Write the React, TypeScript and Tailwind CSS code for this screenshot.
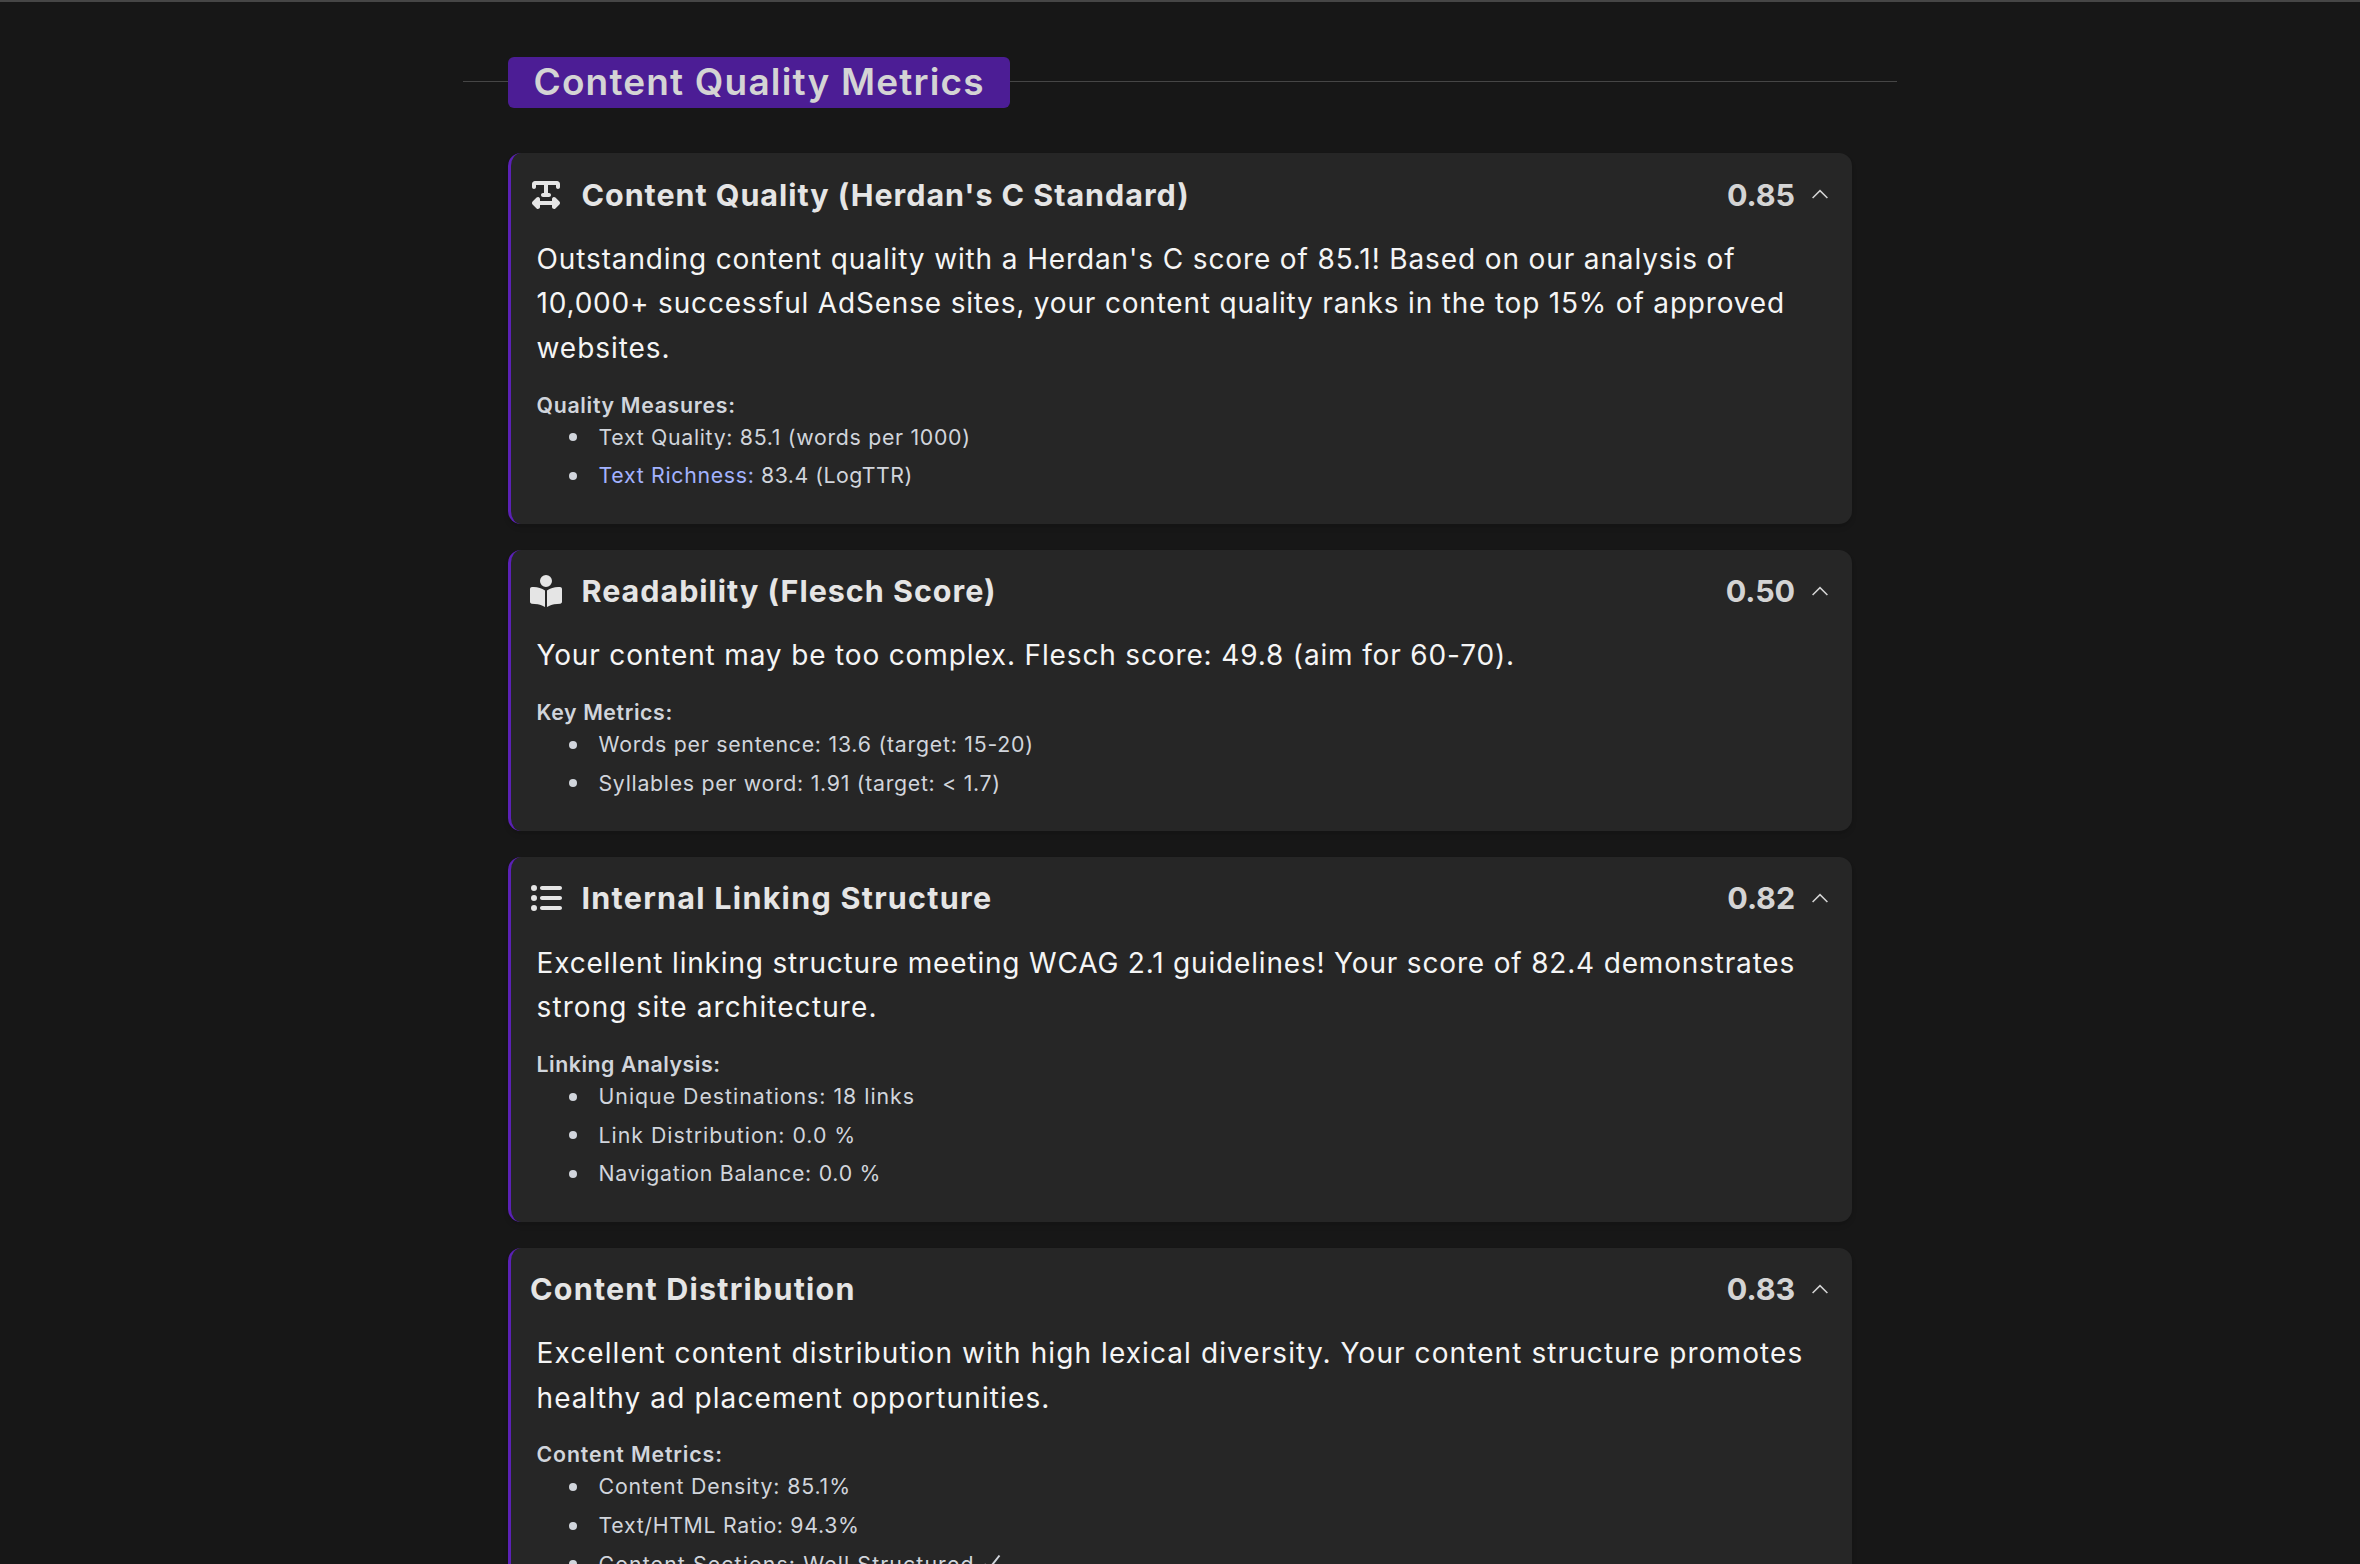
import type { ReactNode } from 'react'
import { FaBookOpenReader, FaListUl, FaTextWidth } from 'react-icons/fa6'

type Line = { text: ReactNode, tracking: string }

type Metric = {
  title: Line
  icon?: ReactNode
  score: string
  summary: Line[]
  label: Line
  items: Line[]
}

const metrics: Metric[] = [
  {
    title: { text: 'Content Quality (Herdan\'s C Standard)', tracking: 'tracking-[0.95px]' },
    icon: <FaTextWidth className="size-8" />,
    score: '0.85',
    summary: [
      { text: 'Outstanding content quality with a Herdan\'s C score of 85.1! Based on our analysis of', tracking: 'tracking-[0.875px]' },
      { text: '10,000+ successful AdSense sites, your content quality ranks in the top 15% of approved', tracking: 'tracking-[0.815px]' },
      { text: 'websites.', tracking: 'tracking-[0.95px]' },
    ],
    label: { text: 'Quality Measures:', tracking: 'tracking-[0.7px]' },
    items: [
      { text: 'Text Quality: 85.1 (words per 1000)', tracking: 'tracking-[0.694px]' },
      {
        text: (
          <>
            <a href="#" className="tracking-[0.7px] text-indigo-300">Text Richness:</a>
            {' 83.4 (LogTTR)'}
          </>
        ),
        tracking: 'tracking-[0.49px]',
      },
    ],
  },
  {
    title: { text: 'Readability (Flesch Score)', tracking: 'tracking-[0.98px]' },
    icon: <FaBookOpenReader className="size-8" />,
    score: '0.50',
    summary: [
      { text: 'Your content may be too complex. Flesch score: 49.8 (aim for 60-70).', tracking: 'tracking-[0.85px]' },
    ],
    label: { text: 'Key Metrics:', tracking: 'tracking-[0.6px]' },
    items: [
      { text: 'Words per sentence: 13.6 (target: 15-20)', tracking: 'tracking-[0.76px]' },
      { text: 'Syllables per word: 1.91 (target: < 1.7)', tracking: 'tracking-[0.71px]' },
    ],
  },
  {
    title: { text: 'Internal Linking Structure', tracking: 'tracking-[1.27px]' },
    icon: <FaListUl className="size-8" />,
    score: '0.82',
    summary: [
      { text: 'Excellent linking structure meeting WCAG 2.1 guidelines! Your score of 82.4 demonstrates', tracking: 'tracking-[0.825px]' },
      { text: 'strong site architecture.', tracking: 'tracking-[1.1px]' },
    ],
    label: { text: 'Linking Analysis:', tracking: 'tracking-[0.54px]' },
    items: [
      { text: 'Unique Destinations: 18 links', tracking: 'tracking-[0.99px]' },
      { text: 'Link Distribution: 0.0 %', tracking: 'tracking-[1px]' },
      { text: 'Navigation Balance: 0.0 %', tracking: 'tracking-[0.73px]' },
    ],
  },
  {
    title: { text: 'Content Distribution', tracking: 'tracking-[1.21px]' },
    score: '0.83',
    summary: [
      { text: 'Excellent content distribution with high lexical diversity. Your content structure promotes', tracking: 'tracking-[1.085px]' },
      { text: 'healthy ad placement opportunities.', tracking: 'tracking-[1.11px]' },
    ],
    label: { text: 'Content Metrics:', tracking: 'tracking-[0.87px]' },
    items: [
      { text: 'Content Density: 85.1%', tracking: 'tracking-[0.87px]' },
      { text: 'Text/HTML Ratio: 94.3%', tracking: 'tracking-[0.69px]' },
      {
        text: (
          <>
            Content Sections: Well Structured
            <CheckMark />
          </>
        ),
        tracking: 'tracking-[1.11px]',
      },
    ],
  },
]

function CheckMark() {
  return (
    <svg viewBox="0 0 18 18" className="ml-2 inline size-[18px] align-baseline" fill="none" stroke="currentColor" strokeWidth="2">
      <path d="M1.5 10 5.5 15.5 16.5 1.5" />
    </svg>
  )
}

function ChevronUp() {
  return (
    <svg viewBox="0 0 16 10" className="mb-px h-[10px] w-4" fill="none" stroke="currentColor" strokeWidth="1.5">
      <path d="M.6 9 8 1.6 15.4 9" />
    </svg>
  )
}

function MetricCard({ title, icon, score, summary, label, items }: Metric) {
  return (
    <section className="rounded-[13px] border-l-[3px] border-[#5b21b6] bg-neutral-800 pt-[21.5px] pb-[29px] shadow-md">
      <header className="flex h-10 items-center pr-6 pl-[19px] text-neutral-200">
        {icon && <span className="mr-[19.5px] shrink-0">{icon}</span>}
        <h3 className={`text-[30.5px] leading-10 font-bold ${title.tracking}`}>{title.text}</h3>
        <div className="ml-auto flex items-center gap-[17px] text-neutral-300">
          <span className="text-[30.5px] leading-10 font-bold tracking-[-0.1px]">{score}</span>
          <ChevronUp />
        </div>
      </header>

      <div className="mt-[22.3px] pl-[25.5px] whitespace-nowrap">
        <p className="text-[28px] leading-[44.6px] text-neutral-100">
          {summary.map((line, i) => (
            <span key={i} className={`block ${line.tracking}`}>{line.text}</span>
          ))}
        </p>
        <div className="mt-[21px] text-[21.3px] text-gray-300">
          <h4 className={`leading-[26px] font-semibold ${label.tracking}`}>{label.text}</h4>
          <ul className="pl-8">
            {items.map((item, i) => (
              <li key={i} className="flex items-center leading-[38.6px]">
                <span className="mt-px mr-[22px] size-2 shrink-0 rounded-full bg-gray-300" />
                <span className={item.tracking}>{item.text}</span>
              </li>
            ))}
          </ul>
        </div>
      </div>
    </section>
  )
}

export default function App() {
  return (
    <main className="h-screen overflow-hidden border-t-2 border-[#464646] bg-neutral-900 font-[Inter,sans-serif]">
      <div className="mx-auto mt-[55px] flex w-[1434px] items-center">
        <span className="mt-[-3px] h-px w-[45px] bg-[#464646]" />
        <h2 className="h-[51px] w-[502px] rounded-[6px] bg-[#4c1d95] pl-[25.5px] text-[37px] leading-[50px] font-semibold tracking-[1.16px] whitespace-nowrap text-neutral-300">
          Content Quality Metrics
        </h2>
        <span className="mt-[-3px] h-px flex-1 bg-[#464646]" />
      </div>

      <div className="mx-auto mt-[45px] flex w-[1344px] flex-col gap-[25.8px]">
        {metrics.map(metric => (
          <MetricCard key={metric.score} {...metric} />
        ))}
      </div>
    </main>
  )
}
